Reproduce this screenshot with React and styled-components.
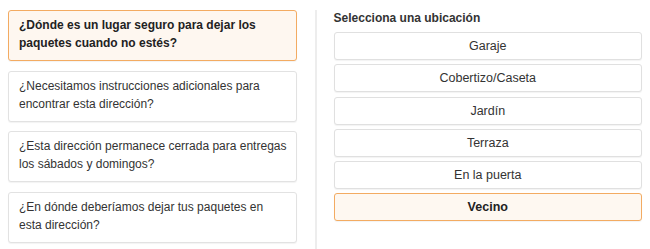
import styled, { createGlobalStyle } from 'styled-components';

const questions = [
  { id: 1, text: '¿Dónde es un lugar seguro para dejar los paquetes cuando no estés?', active: true },
  { id: 2, text: '¿Necesitamos instrucciones adicionales para encontrar esta dirección?' },
  { id: 3, text: '¿Esta dirección permanece cerrada para entregas los sábados y domingos?' },
  { id: 4, text: '¿En dónde deberíamos dejar tus paquetes en esta dirección?' },
];

const places = ['Garaje', 'Cobertizo/Caseta', 'Jardín', 'Terraza', 'En la puerta', 'Vecino'];

const App = () => {
  return (
    <>
      <GlobalStyle />
      <Page>
        <Questions>
          {questions.map(q => (
            <QuestionCard key={q.id} $active={q.active}>
              {q.text}
            </QuestionCard>
          ))}
        </Questions>
        <Divider />
        <Options>
          <Heading>Selecciona una ubicación</Heading>
          {places.map(p => (
            <OptionButton key={p} $active={p === 'Vecino'}>
              {p}
            </OptionButton>
          ))}
        </Options>
      </Page>
    </>
  );
};

export default App;

const GlobalStyle = createGlobalStyle`
body {
  margin: 0;
  background: #fff;
  font-family: "Liberation Sans", Arial, sans-serif;
  color: #333;
}
`;

const Page = styled.div`
display: flex;
height: 249px;
padding: 10px 8px 0 8px;
box-sizing: border-box;
`;

const Questions = styled.div`
width: 289px;
display: flex;
flex-direction: column;
gap: 9.5px;
`;

const QuestionCard = styled.div`
box-sizing: border-box;
height: 51px;
padding: 5px 8px 0 10px;
border: 1px solid ${p => (p.$active ? '#f3ab62' : '#e2e2e2')};
border-radius: 3px;
background: ${p => (p.$active ? '#fef7f0' : '#fff')};
box-shadow: 0 1px 1px rgba(0, 0, 0, 0.05);
font-size: 12px;
line-height: 18px;
font-weight: ${p => (p.$active ? 700 : 400)};
color: ${p => (p.$active ? '#222' : '#333')};
`;

const Divider = styled.div`
width: 2px;
margin-left: 18px;
background: #ededed;
`;

const Options = styled.div`
width: 309px;
margin-left: 17px;
display: flex;
flex-direction: column;
gap: 4.2px;
`;

const Heading = styled.div`
font-size: 12px;
font-weight: 700;
line-height: 17px;
color: #333;
margin-bottom: 1px;
`;

const OptionButton = styled.div`
box-sizing: border-box;
height: 28px;
display: flex;
align-items: center;
justify-content: center;
border: 1px solid ${p => (p.$active ? '#f3ab62' : '#e0e0e0')};
border-radius: 3px;
background: ${p => (p.$active ? '#fef8f1' : '#fff')};
box-shadow: 0 1px 1px rgba(0, 0, 0, 0.05);
font-size: 12.5px;
font-weight: ${p => (p.$active ? 700 : 400)};
color: ${p => (p.$active ? '#222' : '#333')};
`;
